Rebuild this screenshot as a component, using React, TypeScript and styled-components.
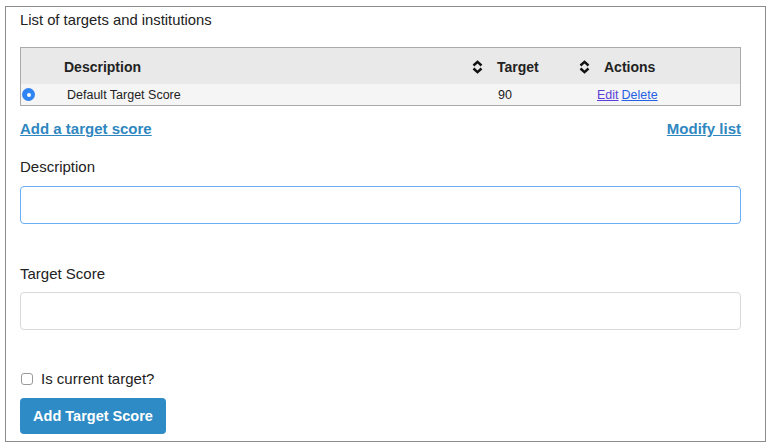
import styled, { createGlobalStyle } from "styled-components";

const GlobalStyle = createGlobalStyle`
  body {
    margin: 0;
    background: #fff;
    font-family: "Liberation Sans", Arial, sans-serif;
    color: #222;
  }
  * {
    box-sizing: border-box;
  }
`;

const Panel = styled.div`
  margin: 6px 0 0 5px;
  width: 761px;
  height: 436px;
  border: 1px solid #8c8c8c;
  padding: 3px 24px 0 14px;
  display: flex;
  flex-direction: column;
`;

const Title = styled.div`
  font-size: 14.8px;
  line-height: 20px;
`;

const Table = styled.div`
  margin-top: 17px;
  border: 1px solid #aaa;
  width: 721px;
`;

const TableRow = styled.div<{ $header?: boolean }>`
  display: grid;
  grid-template-columns: 39px 430px 107px 143px;
  align-items: center;
  height: ${(p) => (p.$header ? "36px" : "21px")};
  padding-top: ${(p) => (p.$header ? "2px" : "0")};
  background: ${(p) => (p.$header ? "#e9e9e9" : "#f5f5f5")};
  font-size: ${(p) => (p.$header ? "14px" : "12.5px")};
  font-weight: ${(p) => (p.$header ? 700 : 400)};
  color: #222;
`;

const Cell = styled.div<{ $pl: number; $sort?: boolean }>`
  display: flex;
  align-items: center;
  justify-content: ${(p) => (p.$sort ? "space-between" : "flex-start")};
  padding-left: ${(p) => p.$pl}px;
  padding-right: 7px;
  height: 100%;
`;

const Radio = styled.span`
  width: 13px;
  height: 13px;
  border-radius: 50%;
  background: #2f83f2;
  margin-left: 1px;
  display: flex;
  align-items: center;
  justify-content: center;
  &::after {
    content: "";
    width: 4px;
    height: 4px;
    border-radius: 50%;
    background: #fff;
  }
`;

const ActionLink = styled.a<{ $visited?: boolean }>`
  color: ${(p) => (p.$visited ? "#5b3fd6" : "#2461e4")};
  text-decoration: underline;
  margin-right: 3px;
  cursor: pointer;
`;

const LinkBar = styled.div`
  display: flex;
  justify-content: space-between;
  margin-top: 13px;
  width: 721px;
  line-height: 20px;
`;

const BoldLink = styled.a`
  color: #2f87c0;
  font-weight: 700;
  font-size: 15px;
  text-decoration: underline;
  cursor: pointer;
`;

const Label = styled.div<{ $mt: number }>`
  font-size: 15px;
  line-height: 20px;
  margin-top: ${(p) => p.$mt}px;
`;

const Input = styled.input<{ $focused?: boolean; $mt: number }>`
  margin-top: ${(p) => p.$mt}px;
  width: 721px;
  height: 38px;
  border: 1px solid ${(p) => (p.$focused ? "#6aaef5" : "#d9d9d9")};
  border-radius: 4px;
  outline: none;
  font-family: inherit;
  font-size: 14px;
  padding: 0 10px;
`;

const CheckRow = styled.label`
  margin-top: 39px;
  display: flex;
  align-items: center;
  gap: 8px;
  font-size: 15px;
  line-height: 20px;
`;

const Checkbox = styled.input`
  appearance: none;
  margin: 0 0 0 1px;
  width: 12px;
  height: 12px;
  border: 1px solid #9a9a9a;
  border-radius: 3px;
  background: #fff;
`;

const Button = styled.button`
  margin-top: 9px;
  width: 146px;
  height: 36px;
  background: #2e8bc5;
  color: #fff;
  border: none;
  border-radius: 4px;
  font-family: inherit;
  font-weight: 700;
  font-size: 14.5px;
  cursor: pointer;
`;

const SortIcon = () => (
  <svg width="11" height="14" viewBox="0 0 11 14">
    <path
      d="M1.5 5.5 L5.5 1.8 L9.5 5.5 M1.5 8.5 L5.5 12.2 L9.5 8.5"
      fill="none"
      stroke="#111"
      strokeWidth="2.4"
    />
  </svg>
);

export default function App() {
  return (
    <>
      <GlobalStyle />
      <Panel>
        <Title>List of targets and institutions</Title>
        <Table>
          <TableRow $header>
            <Cell $pl={0} />
            <Cell $pl={4} $sort>
              Description
              <SortIcon />
            </Cell>
            <Cell $pl={7} $sort>
              Target
              <SortIcon />
            </Cell>
            <Cell $pl={7}>Actions</Cell>
          </TableRow>
          <TableRow>
            <Cell $pl={0}>
              <Radio />
            </Cell>
            <Cell $pl={7}>Default Target Score</Cell>
            <Cell $pl={8}>90</Cell>
            <Cell $pl={0}>
              <ActionLink $visited>Edit</ActionLink>
              <ActionLink>Delete</ActionLink>
            </Cell>
          </TableRow>
        </Table>
        <LinkBar>
          <BoldLink>Add a target score</BoldLink>
          <BoldLink>Modify list</BoldLink>
        </LinkBar>
        <Label $mt={18}>Description</Label>
        <Input $focused $mt={9} />
        <Label $mt={40}>Target Score</Label>
        <Input $mt={8} />
        <CheckRow>
          <Checkbox type="checkbox" />
          Is current target?
        </CheckRow>
        <Button>Add Target Score</Button>
      </Panel>
    </>
  );
}
